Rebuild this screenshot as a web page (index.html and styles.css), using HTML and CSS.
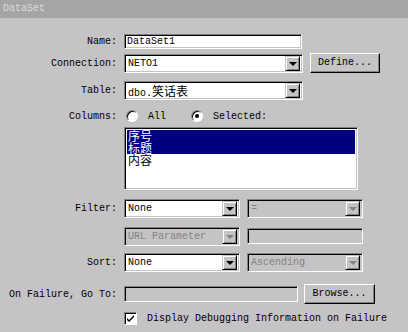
FILE: index.html
```html
<!DOCTYPE html>
<html lang="en">
<head>
    <meta charset="UTF-8">
    <title>DataSet</title>
    <link rel="stylesheet" href="styles.css">
</head>
<body>
    <div class="titlebar">DataSet</div>

    <div class="form">
        <div class="row row-name">
            <div class="label">Name:</div>
            <div class="field text name-input">DataSet1</div>
        </div>

        <div class="row row-conn">
            <div class="label">Connection:</div>
            <div class="field select wide"><span class="value">NETO1</span><span class="drop"></span></div>
            <div class="button define">Define...</div>
        </div>

        <div class="row row-table">
            <div class="label">Table:</div>
            <div class="field select wide"><span class="value">dbo.<span class="cjk">笑话表</span></span><span class="drop"></span></div>
        </div>

        <div class="row row-cols">
            <div class="label">Columns:</div>
            <span class="radio"></span><span class="opt">All</span>
            <span class="radio checked"></span><span class="opt">Selected:</span>
        </div>

        <div class="row row-list">
            <div class="label"></div>
            <div class="field listbox">
                <div class="item sel"><span class="cjk">序号</span></div>
                <div class="item sel"><span class="cjk">标题</span></div>
                <div class="item"><span class="cjk">内容</span></div>
            </div>
        </div>

        <div class="row row-filter">
            <div class="label">Filter:</div>
            <div class="field select narrow"><span class="value">None</span><span class="drop"></span></div>
            <div class="field select narrow right disabled"><span class="value">=</span><span class="drop"></span></div>
        </div>

        <div class="row row-param">
            <div class="label"></div>
            <div class="field select narrow disabled"><span class="value">URL Parameter</span><span class="drop"></span></div>
            <div class="field text param-input disabled"></div>
        </div>

        <div class="row row-sort">
            <div class="label">Sort:</div>
            <div class="field select narrow"><span class="value">None</span><span class="drop"></span></div>
            <div class="field select narrow right disabled"><span class="value">Ascending</span><span class="drop"></span></div>
        </div>

        <div class="row row-fail">
            <div class="label">On Failure, Go To:</div>
            <div class="field text fail-input disabled"></div>
            <div class="button browse">Browse...</div>
        </div>

        <div class="row row-check">
            <div class="label"></div>
            <span class="checkbox">
                <svg width="9" height="9" viewBox="0 0 9 9"><path d="M1 4 L3 6 L8 1 L8 3 L3 8 L1 6 Z" fill="#000"/></svg>
            </span>
            <span class="opt">Display Debugging Information on Failure</span>
        </div>
    </div>
</body>
</html>
```

FILE: styles.css
```css
body {
    margin: 0;
    background: #c6c3c6;
    font-family: "Liberation Mono", monospace;
    font-size: 10px;
    color: #000;
    width: 408px;
    height: 332px;
    overflow: hidden;
}

.cjk {
    font-family: "Noto Sans CJK SC", sans-serif;
    font-size: 12px;
}

.titlebar {
    height: 18px;
    line-height: 18px;
    padding-left: 3px;
    background: #a5a5a5;
    color: #dedbde;
}

.row {
    display: flex;
    align-items: center;
}

.label {
    width: 117px;
    padding-right: 7px;
    text-align: right;
    flex-shrink: 0;
}

.row-name { margin-top: 16px; height: 15px; }
.row-conn { margin-top: 4px; height: 20px; }
.row-table { margin-top: 8px; height: 19px; }
.row-cols { margin-top: 10px; height: 12px; }
.row-list { margin-top: 5px; align-items: flex-start; }
.row-filter { margin-top: 9px; height: 19px; }
.row-param { margin-top: 9px; height: 18px; }
.row-sort { margin-top: 8px; height: 19px; }
.row-fail { margin-top: 12px; height: 20px; }
.row-check { margin-top: 8px; height: 12px; }

/* sunken field */
.field {
    box-sizing: border-box;
    background: #fff;
    border: 1px solid;
    border-color: #848284 #fff #fff #848284;
    box-shadow: inset 1px 1px 0 #000, inset -1px -1px 0 #c6c3c6;
    padding: 2px 3px;
}

.field.disabled {
    background: #c6c3c6;
    color: #848284;
}

.name-input {
    width: 178px;
    height: 15px;
    line-height: 11px;
    padding: 1px 2px;
}

.select {
    display: flex;
    align-items: center;
    height: 19px;
    padding: 2px 2px 2px 3px;
}

.select .value {
    flex: 1;
    white-space: nowrap;
    overflow: hidden;
}

.wide { width: 179px; }
.narrow { width: 116px; }
.right { margin-left: 7px; }

.drop {
    position: relative;
    width: 15px;
    height: 15px;
    box-sizing: border-box;
    background: #c6c3c6;
    border: 1px solid;
    border-color: #c6c3c6 #000 #000 #c6c3c6;
    box-shadow: inset 1px 1px 0 #fff, inset -1px -1px 0 #848284;
    flex-shrink: 0;
}

.drop::after {
    content: "";
    position: absolute;
    left: 3px;
    top: 5px;
    border-left: 4px solid transparent;
    border-right: 4px solid transparent;
    border-top: 4px solid #000;
}

.disabled .drop::after {
    border-top-color: #848284;
}

.button {
    box-sizing: border-box;
    height: 20px;
    line-height: 17px;
    text-align: center;
    background: #c6c3c6;
    border: 1px solid;
    border-color: #fff #000 #000 #fff;
    box-shadow: inset -1px -1px 0 #848284;
}

.define {
    width: 70px;
    margin-left: 7px;
}

.browse {
    width: 71px;
    margin-left: 6px;
}

.radio {
    box-sizing: border-box;
    width: 12px;
    height: 12px;
    border-radius: 50%;
    background: #fff;
    border: 1px solid;
    border-color: #848284 #fff #fff #848284;
    box-shadow: inset 1px 1px 0 #000;
    margin-left: 2px;
    position: relative;
    flex-shrink: 0;
}

.radio.checked::after {
    content: "";
    position: absolute;
    left: 3px;
    top: 3px;
    width: 4px;
    height: 4px;
    border-radius: 50%;
    background: #000;
}

.opt {
    margin-left: 10px;
}

.row-cols .radio.checked {
    margin-left: 25px;
}

.listbox {
    width: 234px;
    height: 63px;
    padding: 2px;
}

.item {
    height: 12px;
    padding-left: 1px;
}

.item .cjk {
    display: block;
    line-height: 12px;
}

.item.sel {
    background: #000080;
    color: #fff;
}

.param-input {
    width: 116px;
    height: 16px;
    margin-left: 7px;
}

.fail-input {
    width: 174px;
    height: 16px;
}

.checkbox {
    box-sizing: border-box;
    width: 13px;
    height: 13px;
    background: #fff;
    border: 1px solid;
    border-color: #848284 #fff #fff #848284;
    box-shadow: inset 1px 1px 0 #000;
    display: flex;
    align-items: center;
    justify-content: center;
    flex-shrink: 0;
}
```
